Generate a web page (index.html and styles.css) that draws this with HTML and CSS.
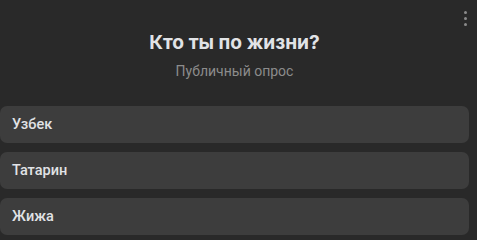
FILE: index.html
```html
<!doctype html>
<html>
<head>
    <title>Опрос</title>
    <meta charset="utf-8" />
    <link rel="stylesheet" href="styles.css">
</head>
<body>
	<div id="pollDiv">
		<div class="menuBtn"><span></span><span></span><span></span></div>
		<h2 class="pollTitle">Кто ты по жизни?</h2>
		<p class="pollType">Публичный опрос</p>
		<div class="answers">
			<div class="answer">Узбек</div>
			<div class="answer">Татарин</div>
			<div class="answer">Жижа</div>
		</div>
	</div>
</body>
</html>
```

FILE: styles.css
```css
body {
	background-color: #292929;
	margin: 0;
	padding: 0;
	font-family: Roboto, "Noto Sans", Arial, sans-serif;
	color: #e1e3e6;
}
#pollDiv {
	position: relative;
	width: 469px;
	padding-top: 30px;
}
.menuBtn {
	position: absolute;
	top: 11px;
	right: 2px;
	display: flex;
	flex-direction: column;
	gap: 3px;
}
.menuBtn span {
	width: 3px;
	height: 3px;
	border-radius: 50%;
	background-color: #8b8b8b;
}
.pollTitle {
	margin: 0;
	text-align: center;
	font-family: Inter, Roboto, sans-serif;
	font-size: 19.2px;
	font-weight: 700;
	line-height: 24px;
	color: #e1e3e6;
}
.pollType {
	margin: 9px 0 0 0;
	text-align: center;
	font-size: 14px;
	line-height: 17px;
	color: #8c8c8c;
}
.answers {
	margin-top: 26px;
	display: flex;
	flex-direction: column;
	gap: 9px;
}
.answer {
	height: 37px;
	line-height: 37px;
	padding-left: 12px;
	background-color: #3d3d3d;
	border-radius: 7px;
	font-size: 14.5px;
	font-weight: 500;
	color: #e1e3e6;
}
```
